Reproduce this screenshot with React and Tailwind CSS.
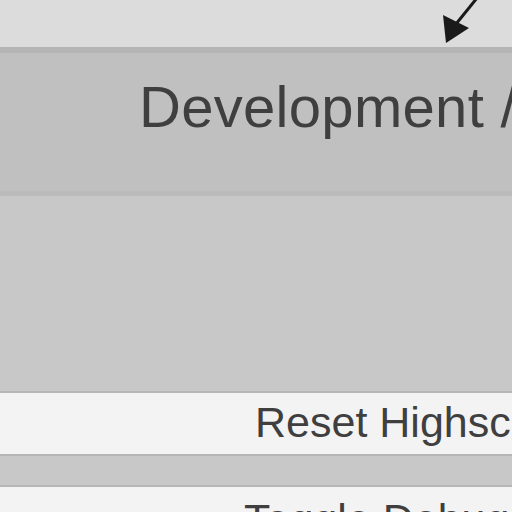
export default function App() {
  return (
    <div className="w-[512px] h-[512px] overflow-hidden bg-[#c8c8c8] flex flex-col font-['Liberation_Sans',Arial,sans-serif]">
      {/* top strip with pointer arrow */}
      <div className="h-[47px] shrink-0 bg-[#dbdcdb] relative">
        <svg className="absolute left-0 top-0" width="512" height="47" viewBox="0 0 512 47">
          <line x1="477" y1="-2" x2="456" y2="24" stroke="#1a1a1a" strokeWidth="3" />
          <polygon points="446,43 443,15 469,28" fill="#1a1a1a" />
        </svg>
      </div>

      {/* header */}
      <div className="h-[144px] shrink-0 bg-[#c0c0c0] border-t-[6px] border-[#b5b5b5] pt-[25px] pl-[139px] whitespace-nowrap overflow-hidden">
        <div className="text-[58px] leading-none tracking-[0.3px] text-[#3f3f3f]">Development / Debug</div>
      </div>

      {/* empty panel */}
      <div className="h-[200px] shrink-0 border-t-[5px] border-[#bbbbbb] bg-[#c8c8c8]" />

      {/* buttons */}
      <div className="h-[65px] shrink-0 border-t-2 border-b-2 border-[#b6b6b6] bg-[#f3f3f3] pt-[8px] pl-[255px] whitespace-nowrap overflow-hidden">
        <div className="text-[43px] leading-none text-[#3f3f3f]">Reset Highscores</div>
      </div>
      <div className="h-[29px] shrink-0 bg-[#c8c8c8]" />
      <div className="h-[40px] shrink-0 border-t-2 border-[#b6b6b6] bg-[#f3f3f3] pt-[11px] pl-[244px] whitespace-nowrap overflow-hidden">
        <div className="text-[43px] leading-none text-[#3f3f3f]">Toggle Debug</div>
      </div>
    </div>
  )
}
